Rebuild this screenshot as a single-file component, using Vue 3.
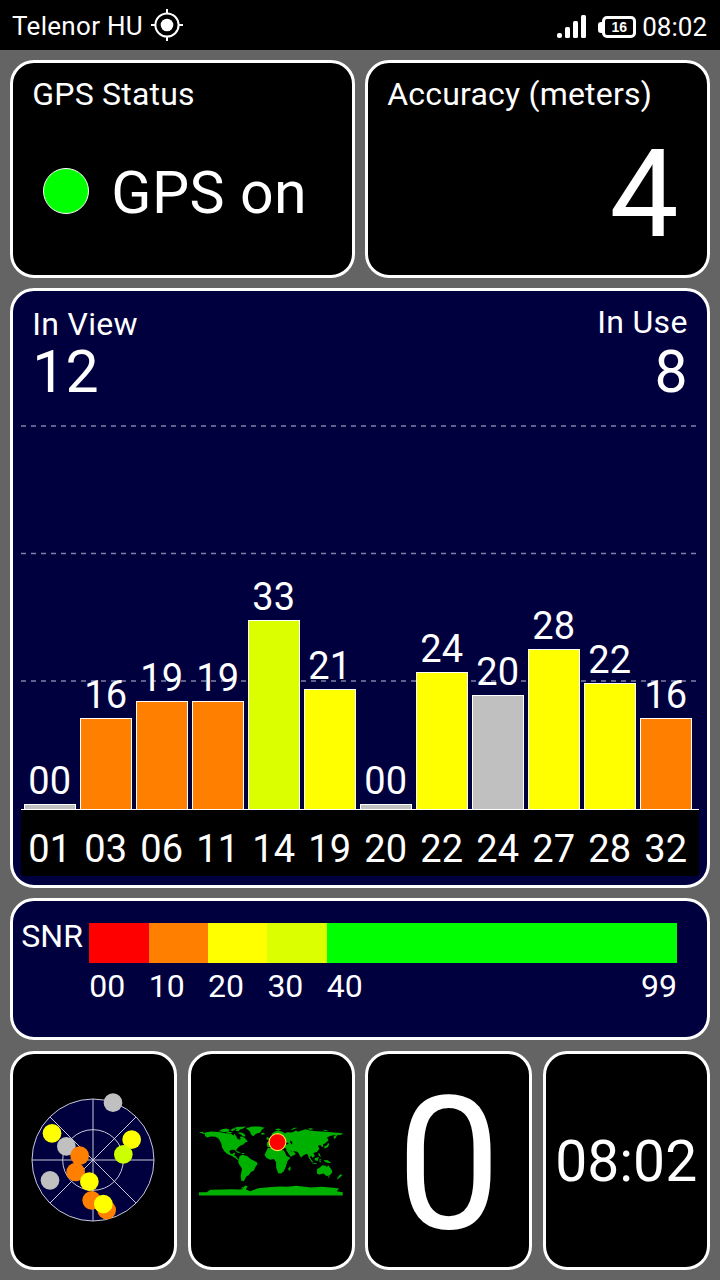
<script setup>
const COLORS = {
  red: '#ff0000',
  orange: '#ff8000',
  yellow: '#ffff00',
  lime: '#dcff00',
  green: '#00ff00',
  idle: '#c0c0c0',
}

const satellites = [
  { id: '01', snr: 0, color: COLORS.idle },
  { id: '03', snr: 16, color: COLORS.orange },
  { id: '06', snr: 19, color: COLORS.orange },
  { id: '11', snr: 19, color: COLORS.orange },
  { id: '14', snr: 33, color: COLORS.lime },
  { id: '19', snr: 21, color: COLORS.yellow },
  { id: '20', snr: 0, color: COLORS.idle },
  { id: '22', snr: 24, color: COLORS.yellow },
  { id: '24', snr: 20, color: COLORS.idle },
  { id: '27', snr: 28, color: COLORS.yellow },
  { id: '28', snr: 22, color: COLORS.yellow },
  { id: '32', snr: 16, color: COLORS.orange },
]

const scale = [
  { label: '00', span: 10, color: COLORS.red },
  { label: '10', span: 10, color: COLORS.orange },
  { label: '20', span: 10, color: COLORS.yellow },
  { label: '30', span: 10, color: COLORS.lime },
  { label: '40', span: 59, color: COLORS.green },
]

const sky = [
  { x: 280, y: 69, c: COLORS.idle },
  { x: 97, y: 161, c: COLORS.yellow },
  { x: 140, y: 200, c: COLORS.idle },
  { x: 91, y: 302, c: COLORS.idle },
  { x: 180, y: 228, c: COLORS.orange },
  { x: 168, y: 277, c: COLORS.orange },
  { x: 209, y: 306, c: COLORS.yellow },
  { x: 336, y: 180, c: COLORS.yellow },
  { x: 311, y: 224, c: '#ccff00' },
  { x: 216, y: 362, c: COLORS.orange },
  { x: 261, y: 391, c: COLORS.orange },
  { x: 251, y: 373, c: COLORS.yellow },
]

const barHeight = (snr) => Math.max(5, Math.floor(snr * 5.73))
const pad = (n) => String(n).padStart(2, '0')
</script>

<template>
  <div class="screen">
    <header class="status">
      <span class="carrier">Telenor HU</span>
      <svg class="gps-icon" viewBox="0 0 34 34" width="34" height="34">
        <circle cx="17" cy="17" r="11.6" fill="none" stroke="#fff" stroke-width="2" />
        <circle cx="17" cy="17" r="6.3" fill="#fff" />
        <path d="M17 1V6M17 28V33M1 17H6M28 17H33" stroke="#fff" stroke-width="2" />
      </svg>
      <svg class="signal" viewBox="0 0 30 24" width="30" height="24">
        <rect x="0" y="18" width="5" height="5" rx="2" fill="#fff" />
        <rect x="8" y="12" width="5" height="11" rx="1.5" fill="#fff" />
        <rect x="16" y="6" width="5" height="17" rx="1.5" fill="#fff" />
        <rect x="24" y="0" width="5" height="23" rx="1.5" fill="#fff" />
      </svg>
      <span class="battery"><span class="cap"></span><span class="cell">16</span></span>
      <span class="clock">08:02</span>
    </header>

    <main class="panels">
      <section class="row top">
        <div class="panel">
          <div class="title">GPS Status</div>
          <div class="gps"><i class="led"></i><span>GPS on</span></div>
        </div>
        <div class="panel">
          <div class="title">Accuracy (meters)</div>
          <div class="accuracy">4</div>
        </div>
      </section>

      <section class="panel navy view">
        <div class="counts">
          <div><div class="small">In View</div><div class="count">12</div></div>
          <div class="right"><div class="small up">In Use</div><div class="count">8</div></div>
        </div>
        <div class="plot">
          <svg class="grid" width="678" height="260" viewBox="0 0 678 260">
            <path d="M0 2H677M0 129.5H677M0 257H677" stroke="#8080a8" stroke-width="1.7" stroke-dasharray="5 5" />
          </svg>
          <div v-for="s in satellites" :key="s.id" class="sat">
            <span class="snr">{{ pad(s.snr) }}</span>
            <i class="bar" :style="{ height: barHeight(s.snr) + 'px', background: s.color }"></i>
          </div>
        </div>
        <div class="ids">
          <span v-for="s in satellites" :key="s.id">{{ s.id }}</span>
        </div>
      </section>

      <section class="panel navy legend">
        <span class="legend-name">SNR</span>
        <div class="legend-scale">
          <div v-for="b in scale" :key="b.label" class="band" :style="{ flexGrow: b.span }">
            <i :style="{ background: b.color }"></i>
            <div class="band-label"><span>{{ b.label }}</span><span v-if="b.span > 10">99</span></div>
          </div>
        </div>
      </section>

      <section class="row bottom">
        <div class="panel tile">
          <svg class="radar" width="150" height="150" viewBox="-5 16 450 450">
            <circle cx="220" cy="241" r="183" fill="#00003f" />
            <g fill="none" stroke="#c8c8d8" stroke-width="3">
              <circle cx="220" cy="241" r="183" />
              <circle cx="220" cy="241" r="91" />
              <path d="M220 58V424M37 241H403M91 112L349 370M91 370L349 112" />
            </g>
            <circle v-for="(d, i) in sky" :key="i" :cx="d.x" :cy="d.y" r="28" :fill="d.c" />
          </svg>
        </div>
        <div class="panel tile">
          <svg class="map" width="160" height="100" viewBox="0 0 480 300">
            <g fill="#00b000">
              <path d="M24 66L35 65 40 69 46 66 60 64 90 66 103 69 120 70 128 76 131 71 137 78 139 85 146 88 149 79 157 80 164 85 171 94 164 97 158 103 148 107 142 113 137 119 138 128 133 120 124 119 116 122 119 131 126 132 130 127 134 130 130 136 136 139 139 145 145 148 141 150 133 144 124 138 111 133 101 124 94 112 91 99 84 86 74 80 60 79 48 82 42 77 43 73 34 70Z" />
              <path d="M82 63L94 57 106 55 116 58 114 63 101 66 91 64ZM105 67L111 64 125 66 121 69ZM118 60L127 55 134 58 126 63ZM126 54L140 50 166 49 158 55 148 58 143 64 134 62 139 57ZM141 68L149 66 161 71 165 78 158 79 151 74Z" />
              <path d="M166 54L184 49 207 49 222 53 214 59 209 67 197 71 188 78 182 74 178 64Z" />
              <path d="M211 69L220 68 223 72 214 74ZM134 123L143 124 151 129 141 128ZM153 129L159 129 162 132 153 132Z" />
              <path d="M147 138L155 134 169 138 180 147 199 157 201 162 194 172 190 182 181 186 174 196 167 200 163 207 159 214 152 213 150 198 154 176 147 166 142 156Z" />
              <path d="M229 105L230 96 239 93 233 89 241 84 248 76 243 71 253 64 265 61 279 66 282 70 291 66 306 67 317 61 323 65 336 60 346 57 358 61 381 63 407 65 433 67 458 69 456 73 441 75 437 83 433 87 430 80 438 74 422 77 411 81 415 91 407 98 398 104 399 111 394 110 391 105 383 107 388 116 380 126 369 129 374 137 367 144 363 137 359 140 364 152 356 144 353 134 348 131 338 137 332 143 324 128 318 124 308 123 317 132 301 140 288 121 287 114 275 113 269 106 263 109 256 102 246 105 239 111 231 111Z" />
              <path d="M232 114L247 112 258 117 270 119 281 121 289 138 300 143 291 154 286 171 280 184 272 191 263 190 257 173 257 157 250 147 239 149 228 144 222 134Z" />
              <path d="M300 169L301 179 296 183 293 176ZM229 80L236 83 233 89 228 89ZM402 110L411 105 414 97 417 104 412 112 403 115Z" />
              <path d="M357 143L365 151 370 158 364 156ZM373 145L386 141 383 153 374 151ZM367 159L380 160 379 162 367 161ZM388 148L395 148 390 151 393 157 388 157ZM384 128L389 131 392 142 386 137ZM401 150L413 151 424 159 412 158 404 155Z" />
              <path d="M380 178L391 171 396 166 407 167 410 172 414 165 425 180 426 188 419 197 409 198 400 191 388 194 381 192ZM413 200L419 200 416 204ZM447 197L452 193 457 195 447 205 440 209 443 203Z" />
              <path d="M24 257V247L47 247 59 240 97 239 123 238 146 239 155 238 163 227 171 229 166 239 179 244 203 235 234 232 269 230 293 231 317 228 363 233 393 231 431 234 447 236 440 244 458 247V257Z" />
              <path d="M253 57L265 55 273 58 262 61ZM300 60L311 53 321 53 307 59ZM353 55L365 54 369 58 357 59ZM399 59L410 60 416 63 401 62ZM150 235L157 231 160 236Z" />
            </g>
            <path d="M299 91L306 95 305 104 300 99ZM279 98L291 97 296 102 282 104ZM152 83L147 89 142 86ZM281 120L291 137 287 123ZM303 122L307 127 300 121Z" fill="#000" />
            <circle cx="261" cy="96" r="25.5" fill="#f00" stroke="#ffe040" stroke-width="3.5" />
          </svg>
        </div>
        <div class="panel tile speed"><span>0</span></div>
        <div class="panel tile time"><span>08:02</span></div>
      </section>
    </main>
  </div>
</template>

<style>
body {
  background: #646464;
}
</style>

<style scoped>
.screen {
  width: 720px;
  height: 1280px;
  display: flex;
  flex-direction: column;
  overflow: hidden;
  background: #646464;
  color: #fff;
  font-family: Roboto, "Liberation Sans", sans-serif;
  white-space: nowrap;
}
.status {
  height: 50px;
  flex: none;
  box-sizing: border-box;
  display: flex;
  align-items: center;
  padding: 0 13px 0 12px;
  background: #000;
  font-size: 26px;
  line-height: 30px;
}
.carrier {
  margin-top: 2px;
  letter-spacing: 0.3px;
}
.gps-icon {
  margin-left: 7px;
}
.signal {
  margin-left: auto;
  margin-top: 3px;
}
.battery {
  display: flex;
  align-items: center;
  margin: 4px 6px 0 11px;
}
.cap {
  width: 4px;
  height: 11px;
  border-radius: 3px 0 0 3px;
  background: #fff;
}
.cell {
  box-sizing: border-box;
  width: 34px;
  height: 22px;
  border: 3px solid #fff;
  border-radius: 5px;
  font: bold 14px/16px "Liberation Sans", sans-serif;
  text-align: center;
}
.clock {
  margin-top: 4px;
}
.panels {
  flex: 1;
  display: grid;
  grid-template-rows: 217.5px 599.5px 142px 219px;
  row-gap: 10.6px;
  padding: 10.2px 10.3px 0;
}
.row {
  display: grid;
  column-gap: 10.5px;
}
.top {
  grid-template-columns: 1fr 1fr;
}
.bottom {
  grid-template-columns: repeat(4, 1fr);
}
.panel {
  box-sizing: border-box;
  min-width: 0;
  border: 3px solid #fff;
  border-radius: 24px;
  background: #000;
}
.navy {
  background: #00003f;
}
.title {
  padding: 12px 19px 0;
  font-size: 32px;
  line-height: 38px;
  letter-spacing: 0.2px;
}
.gps {
  display: flex;
  align-items: center;
  gap: 22px;
  padding: 45px 0 0 30px;
  font-size: 59px;
  line-height: 70px;
  letter-spacing: 0.4px;
}
.led {
  box-sizing: border-box;
  width: 46px;
  height: 46px;
  margin-bottom: 4px;
  border: 1.5px solid #fff;
  border-radius: 50%;
  background: #0f0;
}
.accuracy {
  padding: 9px 28px 0 0;
  font-size: 123px;
  line-height: 144px;
  text-align: right;
}
.view {
  padding: 14px 8px 0;
}
.counts {
  display: flex;
  justify-content: space-between;
  height: 119px;
  padding: 0 11px;
}
.right {
  text-align: right;
}
.small {
  font-size: 32px;
  line-height: 38px;
  letter-spacing: 0.3px;
}
.up {
  margin-top: -2px;
  margin-bottom: 2px;
}
.count {
  font-size: 59px;
  line-height: 57px;
}
.plot {
  position: relative;
  display: flex;
  gap: 4px;
  height: 385px;
  padding-left: 3px;
  border-bottom: 1px solid #fff;
}
.grid {
  position: absolute;
  left: 0;
  bottom: 125px;
}
.sat {
  position: relative;
  width: 52px;
  display: flex;
  flex-direction: column;
  justify-content: flex-end;
}
.snr {
  padding-left: 4px;
  font-size: 38px;
  line-height: 44px;
  margin-bottom: 1px;
}
.bar {
  box-sizing: border-box;
  border: 1px solid #fff;
  border-bottom: 0;
}
.ids {
  display: flex;
  gap: 4px;
  height: 66px;
  padding-left: 3px;
  background: #000;
  font-size: 38px;
  line-height: 78px;
}
.ids span {
  box-sizing: border-box;
  width: 52px;
  padding-left: 4px;
}
.legend {
  display: flex;
  padding: 22px 0 0 8px;
  font-size: 32px;
  line-height: 38px;
}
.legend-name {
  width: 68px;
  margin-top: -6px;
}
.legend-scale {
  display: flex;
  width: 587.6px;
}
.band {
  flex-basis: 0;
  min-width: 0;
}
.band i {
  display: block;
  height: 40px;
}
.band-label {
  display: flex;
  justify-content: space-between;
  padding-top: 4px;
}
.tile {
  display: flex;
  align-items: center;
  justify-content: center;
}
.radar,
.map {
  margin-right: 2px;
}
.speed {
  padding-top: 8px;
  font-size: 186px;
  line-height: 200px;
}
.time {
  padding-top: 3px;
  font-size: 57px;
  line-height: 66px;
}
</style>
